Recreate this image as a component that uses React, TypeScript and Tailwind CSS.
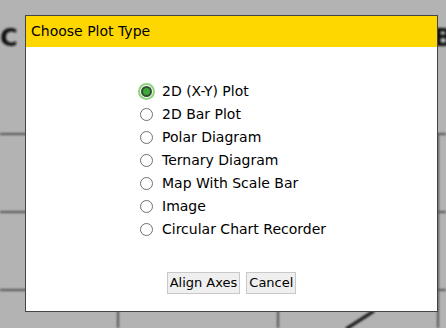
import { useState } from "react";

const plotTypes = [
  "2D (X-Y) Plot",
  "2D Bar Plot",
  "Polar Diagram",
  "Ternary Diagram",
  "Map With Scale Bar",
  "Image",
  "Circular Chart Recorder",
];

function Backdrop() {
  return (
    <svg width="446" height="328" className="block">
      <defs>
        <filter id="soft" x="-10%" y="-10%" width="120%" height="120%">
          <feGaussianBlur stdDeviation="0.9" />
        </filter>
      </defs>
      <rect width="446" height="328" fill="#b3b3b3" />
      <g filter="url(#soft)" stroke="#555" strokeWidth="2">
        <line x1="0" y1="134" x2="446" y2="134" />
        <line x1="0" y1="212" x2="446" y2="212" />
        <line x1="0" y1="290" x2="446" y2="290" />
        <line x1="118" y1="290" x2="118" y2="328" />
        <line x1="278" y1="290" x2="278" y2="328" />
        <line x1="438" y1="134" x2="438" y2="328" />
        <line x1="346" y1="329" x2="374" y2="311" stroke="#111" strokeWidth="3" />
      </g>
      <g filter="url(#soft)" fill="#111" fontFamily="'DejaVu Sans', sans-serif" fontWeight="700" fontSize="24">
        <text x="0" y="46">C</text>
        <text x="434" y="46">B</text>
      </g>
    </svg>
  );
}

function Radio({ checked }: { checked: boolean }) {
  if (checked) {
    return (
      <span className="flex h-[17px] w-[17px] items-center justify-center rounded-full bg-[#8fd37f]">
        <span className="flex h-[13px] w-[13px] items-center justify-center rounded-full bg-white">
          <span className="h-[11px] w-[11px] rounded-full border-2 border-[#2f4f2f] bg-[#3fa83a]" />
        </span>
      </span>
    );
  }
  return (
    <span className="flex h-[17px] w-[17px] items-center justify-center">
      <span className="h-[13px] w-[13px] rounded-full border border-[#6f6f6f] bg-white" />
    </span>
  );
}

export default function App() {
  const [choice, setChoice] = useState(0);

  return (
    <div className="relative h-[328px] w-[446px] overflow-hidden font-['DejaVu_Sans',sans-serif] text-black">
      <Backdrop />
      <div className="absolute left-[25px] top-[15px] flex h-[297px] w-[413px] flex-col border border-[#444] bg-white">
        <div className="flex h-[31px] items-center bg-[#ffd700] pl-[5px] text-[14px]">Choose Plot Type</div>
        <div className="flex flex-col pl-[112px] pt-[33px]">
          {plotTypes.map((label, i) => (
            <label
              key={label}
              onClick={() => setChoice(i)}
              className="flex h-[23px] cursor-pointer items-center gap-[7px] text-[14px]"
            >
              <Radio checked={choice === i} />
              <span>{label}</span>
            </label>
          ))}
        </div>
        <div className="mt-[31px] flex justify-center gap-[6px] text-[13px]">
          <button className="h-[22px] border border-[#c8c8c8] bg-[#efefef] px-[2px]">Align Axes</button>
          <button className="h-[22px] border border-[#c8c8c8] bg-[#efefef] px-[2px]">Cancel</button>
        </div>
      </div>
    </div>
  );
}
